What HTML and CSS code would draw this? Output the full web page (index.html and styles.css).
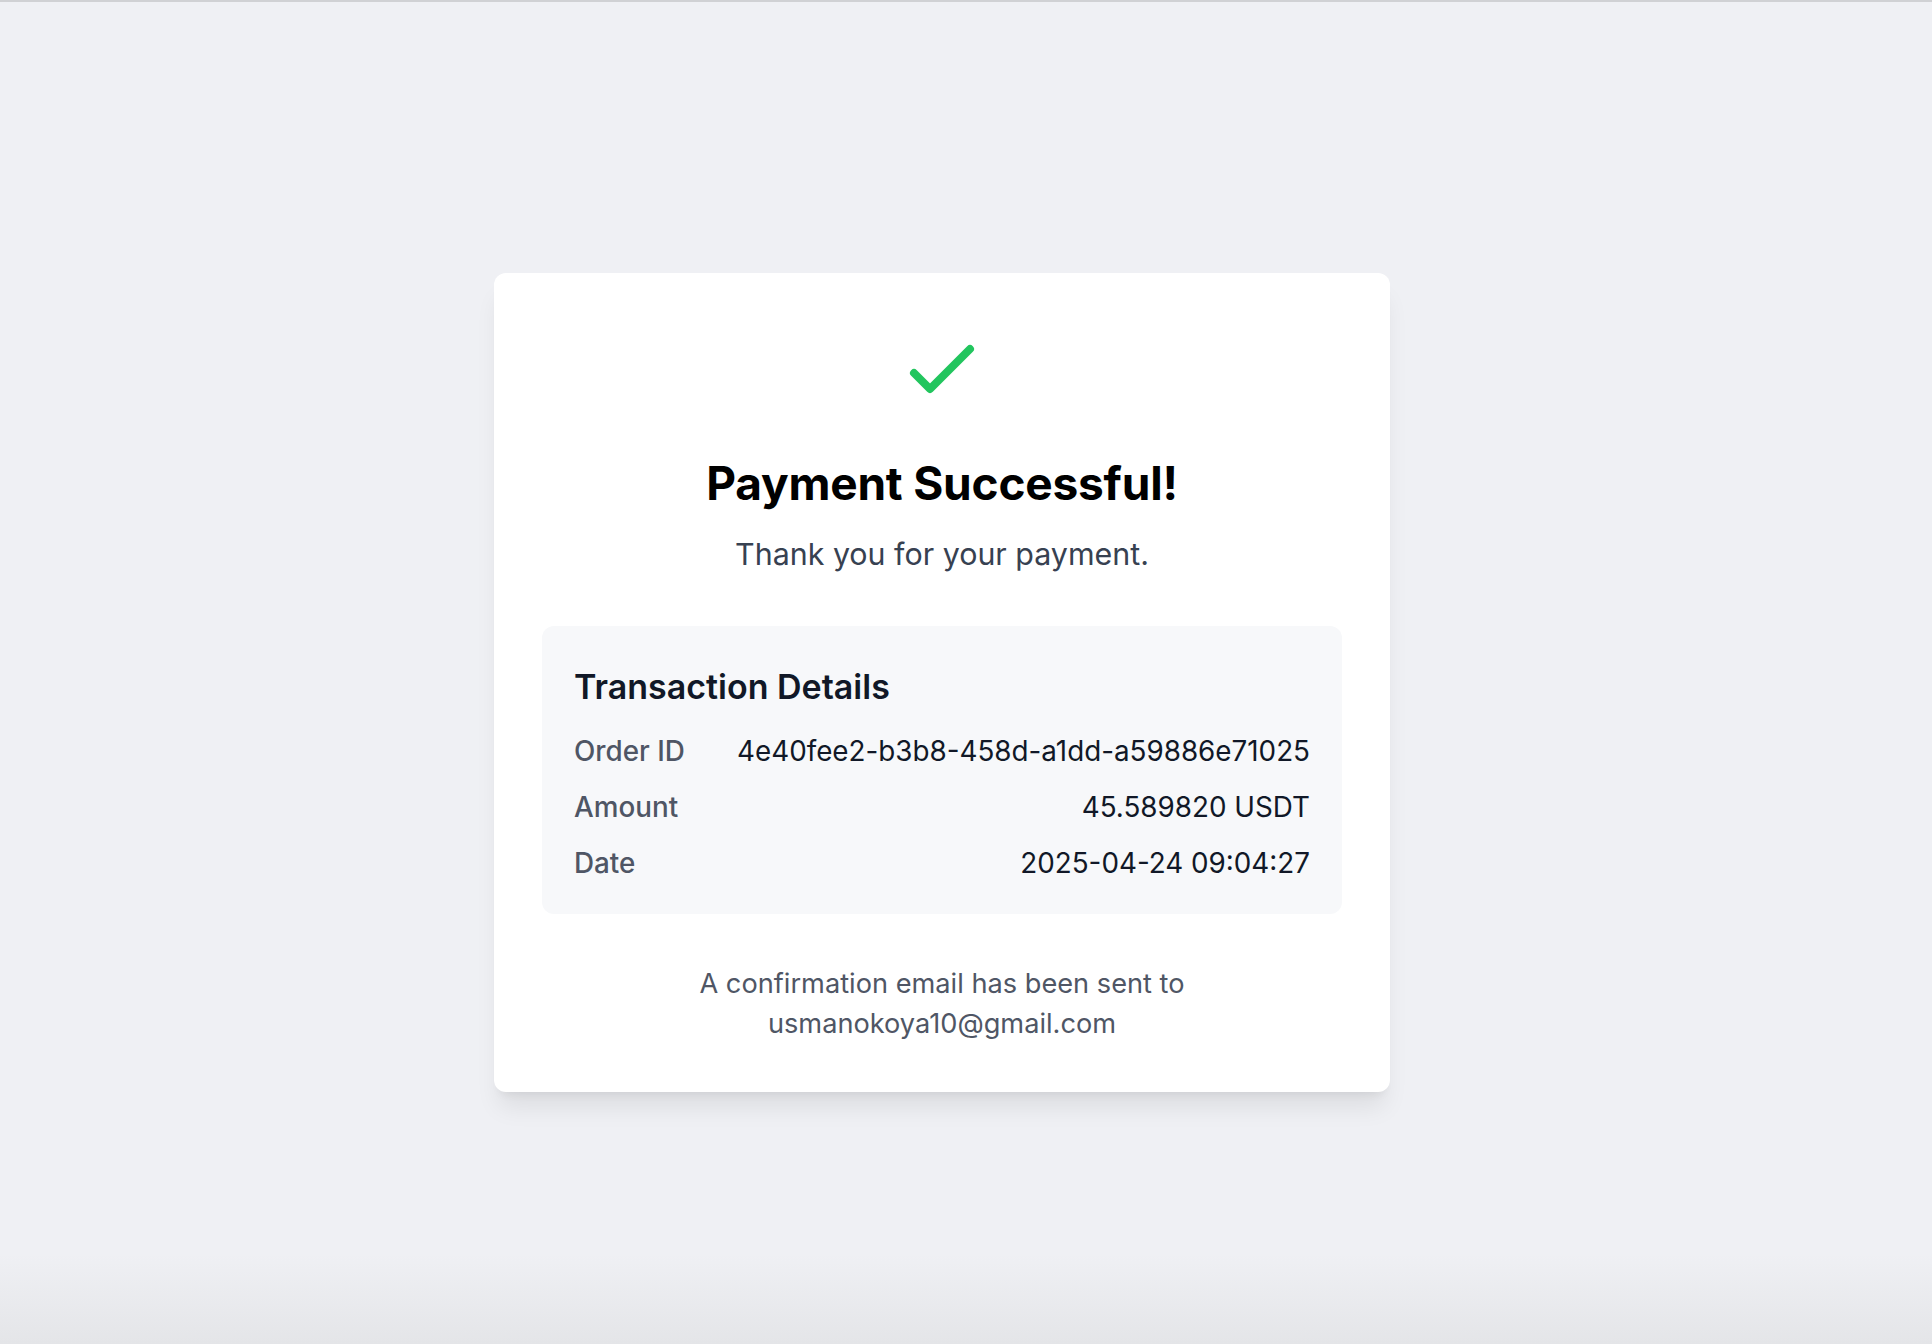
FILE: index.html
```html
<!DOCTYPE html>
<html lang="en">
<head>
<meta charset="utf-8">
<title>Payment Successful</title>
<link rel="stylesheet" href="styles.css">
</head>
<body>
<div class="topline"></div>
<main class="page">
  <section class="card">
    <svg class="check" viewBox="0 0 24 24" fill="none" stroke="currentColor" stroke-width="2" stroke-linecap="round" stroke-linejoin="round"><path d="M5 13l4 4L19 7"/></svg>
    <h1 class="title">Payment Successful!</h1>
    <p class="subtitle">Thank you for your payment.</p>
    <div class="details">
      <h2 class="details-title">Transaction Details</h2>
      <div class="row"><span class="label">Order ID</span><span class="value">4e40fee2-b3b8-458d-a1dd-a59886e71025</span></div>
      <div class="row"><span class="label">Amount</span><span class="value">45.589820 USDT</span></div>
      <div class="row"><span class="label">Date</span><span class="value">2025-04-24 09:04:27</span></div>
    </div>
    <p class="note">A confirmation email has been sent to<br>usmanokoya10@gmail.com</p>
  </section>
</main>
<div class="bottomfade"></div>
</body>
</html>
```
FILE: styles.css
```css
html, body {
  margin: 0;
  padding: 0;
}
body {
  background: #eff0f4;
  font-family: Inter, "Noto Sans", sans-serif;
  min-height: 1344px;
  position: relative;
  overflow: hidden;
}
.topline {
  height: 2px;
  background: #d0d1d4;
}
.page {
  height: 1342px;
  box-sizing: border-box;
  padding: 18px 48px 0 0;
  display: flex;
  align-items: center;
  justify-content: center;
}
.card {
  width: 896px;
  box-sizing: border-box;
  padding: 48px;
  background: #ffffff;
  border-radius: 12px;
  box-shadow: 0 20px 25px -5px rgba(0,0,0,0.08), 0 8px 10px -6px rgba(0,0,0,0.07);
  display: flex;
  flex-direction: column;
  align-items: center;
  text-align: center;
}
.check {
  width: 96px;
  height: 96px;
  color: #22c55e;
  display: block;
}
.title {
  margin: 40px 0 0;
  font-size: 46px;
  line-height: 52px;
  font-weight: 700;
  color: #000;
  letter-spacing: -0.2px;
}
.subtitle {
  margin: 25px 0 0;
  font-size: 30.4px;
  line-height: 40px;
  color: #374151;
}
.details {
  margin-top: 52px;
  width: 800px;
  box-sizing: border-box;
  padding: 33px 32px 31px;
  background: #f7f8fa;
  border-radius: 12px;
  text-align: left;
  display: flex;
  flex-direction: column;
  gap: 16px;
}
.details-title {
  margin: 0;
  font-size: 34px;
  line-height: 56px;
  font-weight: 600;
  color: #111827;
}
.row {
  display: flex;
  justify-content: space-between;
  font-size: 27.8px;
  line-height: 40px;
}
.label {
  color: #4f5665;
  font-weight: 500;
}
.value {
  color: #111827;
}
.note {
  margin: 50px 0 0;
  font-size: 27.2px;
  line-height: 40px;
  color: #4f5665;
}
.bottomfade {
  position: absolute;
  left: 0;
  right: 0;
  bottom: 0;
  height: 90px;
  background: linear-gradient(to bottom, rgba(229,230,233,0), #e4e5e8);
  pointer-events: none;
}
```
